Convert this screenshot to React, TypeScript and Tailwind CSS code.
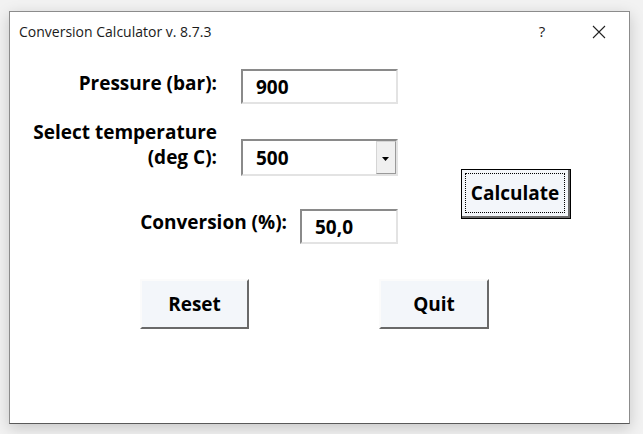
import React from 'react';

const label = 'font-["Open_Sans",sans-serif] font-bold text-[19px] leading-[24px] text-black';
const sunken = 'border-2 border-t-[#8a8a8a] border-l-[#8a8a8a] border-r-[#e3e3e3] border-b-[#e3e3e3] bg-white';
const raised = 'border-2 border-t-[#fbfbfb] border-l-[#fbfbfb] border-r-[#696969] border-b-[#696969] bg-[#f3f6fa]';

export default function App() {
  return (
    <div className="w-[643px] h-[434px] bg-[#f2f2f2] pt-[11px] pl-[9px]">
      <div className="w-[621px] h-[413px] bg-white border border-[#8c8c8c] border-b-[#5a5a5a] shadow-[0_4px_14px_rgba(0,0,0,0.18)] flex flex-col">
        {/* Title bar */}
        <div className="h-[37px] shrink-0 flex items-center pl-[9px] pt-[2px] font-['Open_Sans',sans-serif] text-[14px] text-[#1a1a1a]">
          <span className="flex-1">Conversion Calculator v. 8.7.3</span>
          <span className="w-[20px] text-center text-[15px] mr-[40px]">?</span>
          <svg width="14" height="14" viewBox="0 0 14 14" className="mr-[23px]">
            <path d="M1 1L13 13M13 1L1 13" stroke="#222" strokeWidth="1.1" />
          </svg>
        </div>

        {/* Form body */}
        <div className="flex mt-[20px]">
          <div className="flex flex-col">
            <div className="flex items-center">
              <div className={`${label} w-[207px] text-right mb-[7px]`}>Pressure (bar):</div>
              <div className={`${sunken} ml-[24px] w-[157px] h-[35px] flex items-center pl-[13px]`}>
                <span className={label}>900</span>
              </div>
            </div>

            <div className="flex items-end mt-[16px]">
              <div className={`${label} w-[207px] text-right leading-[25px] mb-[6px]`}>
                Select temperature
                <br />
                (deg C):
              </div>
              <div className={`${sunken} ml-[24px] w-[157px] h-[37px] flex items-center pl-[13px]`}>
                <span className={`${label} flex-1`}>500</span>
                <div className="w-[20px] h-[33px] bg-[#f0f0f0] border border-[#d5d5d5] border-r-[#9a9a9a] border-b-[#9a9a9a] flex items-center justify-center">
                  <svg width="8" height="5" viewBox="0 0 8 5" className="mt-[3px]">
                    <path d="M0 0H7L3.5 4Z" fill="#000" />
                  </svg>
                </div>
              </div>
            </div>

            <div className="flex items-center mt-[33px]">
              <div className={`${label} w-[277px] text-right mb-[9px]`}>Conversion (%):</div>
              <div className={`${sunken} ml-[13px] w-[98px] h-[35px] flex items-center pl-[13px]`}>
                <span className={label}>50,0</span>
              </div>
            </div>
          </div>

          <div className="ml-[63px] mt-[100px]">
            <div className="w-[110px] h-[50px] border border-black bg-[#f3f6fa] shadow-[inset_-2px_-2px_0_#696969] p-[3px] pr-[5px] pb-[5px]">
              <div className="w-full h-full border border-dotted border-black flex items-center justify-center">
                <span className={label}>Calculate</span>
              </div>
            </div>
          </div>
        </div>

        <div className="flex mt-[35px] pl-[130px]">
          <div className={`${raised} w-[109px] h-[50px] flex items-center justify-center`}>
            <span className={label}>Reset</span>
          </div>
          <div className={`${raised} ml-[130px] w-[110px] h-[50px] flex items-center justify-center`}>
            <span className={label}>Quit</span>
          </div>
        </div>
      </div>
    </div>
  );
}
